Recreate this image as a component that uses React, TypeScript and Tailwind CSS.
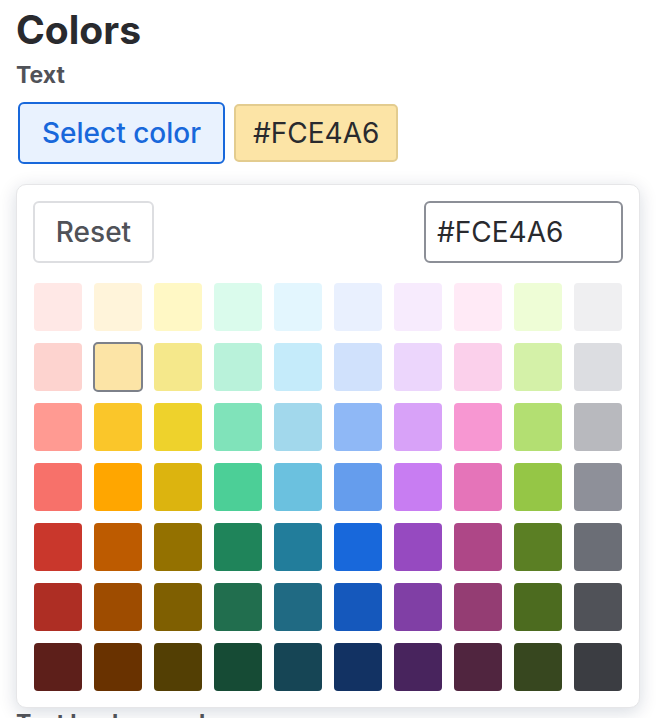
import { useState } from 'react'

const rows: string[][] = [
  ['#ffe8e6', '#fff4da', '#fff8c5', '#dafbec', '#e3f6fe', '#e9f0fe', '#f7ebfd', '#ffeaf6', '#eefdd6', '#efeff1'],
  ['#fdd3cf', '#fce4a6', '#f5e88b', '#b9f2da', '#c5ebfa', '#d0e1fc', '#ecd6fc', '#fbd0eb', '#d4f1a8', '#dcdde1'],
  ['#ff9a92', '#fac62a', '#eed22c', '#80e3ba', '#a2d8ec', '#8fb8f6', '#d8a2f8', '#f797d2', '#b3df72', '#b8b9be'],
  ['#f7716a', '#ffa600', '#dcb40f', '#4ccf97', '#6bc1df', '#659ded', '#c87df2', '#e574b9', '#95c646', '#8e9099'],
  ['#c9372c', '#bd5b00', '#947100', '#1f845a', '#227d9b', '#1868db', '#964ac0', '#ae4787', '#5b7f24', '#6b6e76'],
  ['#ae2e24', '#9e4c00', '#7f5f01', '#216e4e', '#206a83', '#1558bc', '#803fa5', '#943d73', '#4c6b1f', '#505258'],
  ['#5d1f1a', '#693200', '#533f04', '#164b35', '#164555', '#123263', '#48245d', '#50253f', '#37471f', '#3b3d42'],
]

export default function App() {
  const [selected, setSelected] = useState('#fce4a6')
  const hex = selected.toUpperCase()

  return (
    <div className="min-h-screen bg-white px-4 pt-[6px] font-['Inter','Liberation_Sans',sans-serif] text-[#292a2e] overflow-hidden">
      <h1 className="text-[39px] leading-[48px] font-bold">Colors</h1>
      <div className="mt-[7px] text-[23px] leading-[28px] font-bold text-[#505258]">Text</div>

      <div className="mt-[13px] ml-[2px] flex items-center gap-[9px]">
        <button className="h-[62px] px-[22px] rounded-[6px] border-2 border-[#1868db] bg-[#e9f2fe] text-[28px] font-medium text-[#1868db]">
          Select color
        </button>
        <div
          className="h-[58px] px-[17px] flex items-center rounded-[5px] border-2 border-[#e3cc8f] text-[28px] text-[#292a2e]"
          style={{ backgroundColor: selected }}
        >
          {hex}
        </div>
      </div>

      {/* Picker popup */}
      <div className="mt-5 w-[624px] rounded-[10px] border border-[#e6e6e8] bg-white p-4 shadow-[0_4px_18px_rgba(9,30,66,0.16)]">
        <div className="flex items-center justify-between">
          <button
            className="h-[62px] w-[121px] rounded-[6px] border-2 border-[#dddee1] text-[28px] font-medium text-[#505258]"
            onClick={() => setSelected('#fce4a6')}
          >
            Reset
          </button>
          <input
            readOnly
            value={hex}
            className="h-[62px] w-[199px] rounded-[6px] border-2 border-[#8c8f97] px-[11px] text-[28px] text-[#292a2e] outline-none"
          />
        </div>

        <div className="mt-5 ml-px grid grid-cols-[repeat(10,48px)] gap-3">
          {rows.flat().map(c => (
            <button
              key={c}
              onClick={() => setSelected(c)}
              className={
                c === selected
                  ? 'w-[50px] h-[50px] -m-px rounded-[5px] border-2 border-[#7d818a]'
                  : 'w-12 h-12 rounded-[4px]'
              }
              style={{ backgroundColor: c }}
            />
          ))}
        </div>
      </div>

      <div className="mt-[1px] text-[23px] leading-[28px] font-bold text-[#505258]">Text background</div>
    </div>
  )
}
